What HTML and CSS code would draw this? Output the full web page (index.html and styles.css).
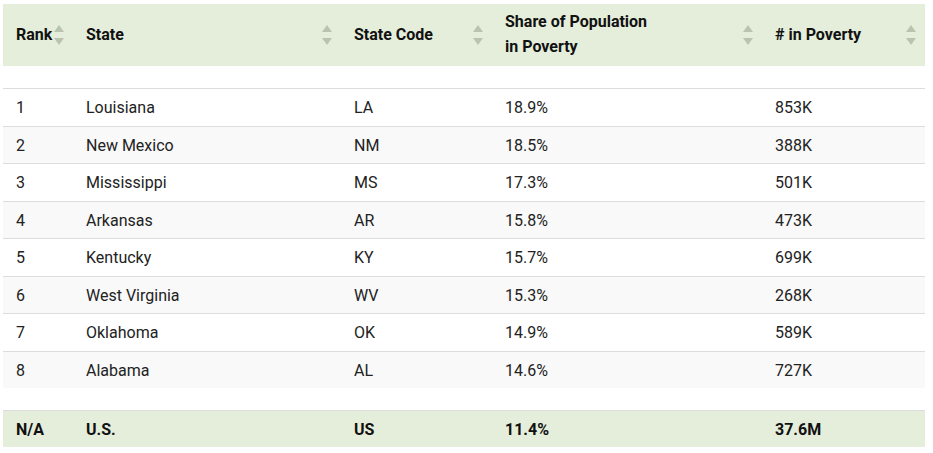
FILE: index.html
```html
<!DOCTYPE html>
<html lang="en">
<head>
<meta charset="utf-8">
<title>Poverty by State</title>
<link rel="stylesheet" href="styles.css">
</head>
<body>
<table class="data">
  <colgroup>
    <col class="c1"><col class="c2"><col class="c3"><col class="c4"><col class="c5">
  </colgroup>
  <thead>
    <tr class="head">
      <th><span class="lbl">Rank</span><span class="sort"></span></th>
      <th><span class="lbl">State</span><span class="sort"></span></th>
      <th><span class="lbl">State Code</span><span class="sort"></span></th>
      <th><span class="lbl">Share of Population<br>in Poverty</span><span class="sort"></span></th>
      <th><span class="lbl"># in Poverty</span><span class="sort"></span></th>
    </tr>
    <tr class="spacer"><td colspan="5"></td></tr>
  </thead>
  <tbody>
    <tr><td>1</td><td>Louisiana</td><td>LA</td><td>18.9%</td><td>853K</td></tr>
    <tr><td>2</td><td>New Mexico</td><td>NM</td><td>18.5%</td><td>388K</td></tr>
    <tr><td>3</td><td>Mississippi</td><td>MS</td><td>17.3%</td><td>501K</td></tr>
    <tr><td>4</td><td>Arkansas</td><td>AR</td><td>15.8%</td><td>473K</td></tr>
    <tr><td>5</td><td>Kentucky</td><td>KY</td><td>15.7%</td><td>699K</td></tr>
    <tr><td>6</td><td>West Virginia</td><td>WV</td><td>15.3%</td><td>268K</td></tr>
    <tr><td>7</td><td>Oklahoma</td><td>OK</td><td>14.9%</td><td>589K</td></tr>
    <tr><td>8</td><td>Alabama</td><td>AL</td><td>14.6%</td><td>727K</td></tr>
  </tbody>
  <tfoot>
    <tr class="spacer"><td colspan="5"></td></tr>
    <tr class="total"><td>N/A</td><td>U.S.</td><td>US</td><td>11.4%</td><td>37.6M</td></tr>
  </tfoot>
</table>
</body>
</html>
```
FILE: styles.css
```css
html, body {
  margin: 0;
  padding: 0;
  background: #ffffff;
}
body {
  padding: 4px 8px 0 3px;
  font-family: Roboto, "Liberation Sans", Arial, sans-serif;
  font-size: 16px;
  color: #222222;
}
.data {
  width: 922px;
  border-collapse: collapse;
  table-layout: fixed;
}
.c1 { width: 70px; }
.c2 { width: 268px; }
.c3 { width: 151px; }
.c4 { width: 270px; }
.c5 { width: 163px; }

.head th {
  background: #e4eedb;
  color: #111111;
  font-weight: 700;
  text-align: left;
  vertical-align: middle;
  padding: 5px 0 7px 13px;
  line-height: 25px;
  height: 50px;
  position: relative;
}
.lbl {
  display: inline-block;
}
.sort {
  position: absolute;
  right: 9px;
  top: 50%;
  width: 10px;
  height: 22px;
  margin-top: -11px;
}
.sort::before,
.sort::after {
  content: "";
  position: absolute;
  left: 0;
  width: 0;
  height: 0;
  border-left: 5px solid transparent;
  border-right: 5px solid transparent;
}
.sort::before {
  top: 1px;
  border-bottom: 7px solid #b9c4ae;
}
.sort::after {
  bottom: 1px;
  border-top: 7px solid #b9c4ae;
}

.spacer td {
  height: 22px;
  padding: 0;
  background: #ffffff;
}

tbody td,
.total td {
  padding: 7px 0 5px 13px;
  line-height: 24.5px;
  border-top: 1px solid #dddddd;
  white-space: nowrap;
}
tbody tr:nth-child(even) td {
  background: #f9f9f9;
}
.total td {
  background: #e4eedb;
  font-weight: 700;
  color: #111111;
  line-height: 24px;
}
```
